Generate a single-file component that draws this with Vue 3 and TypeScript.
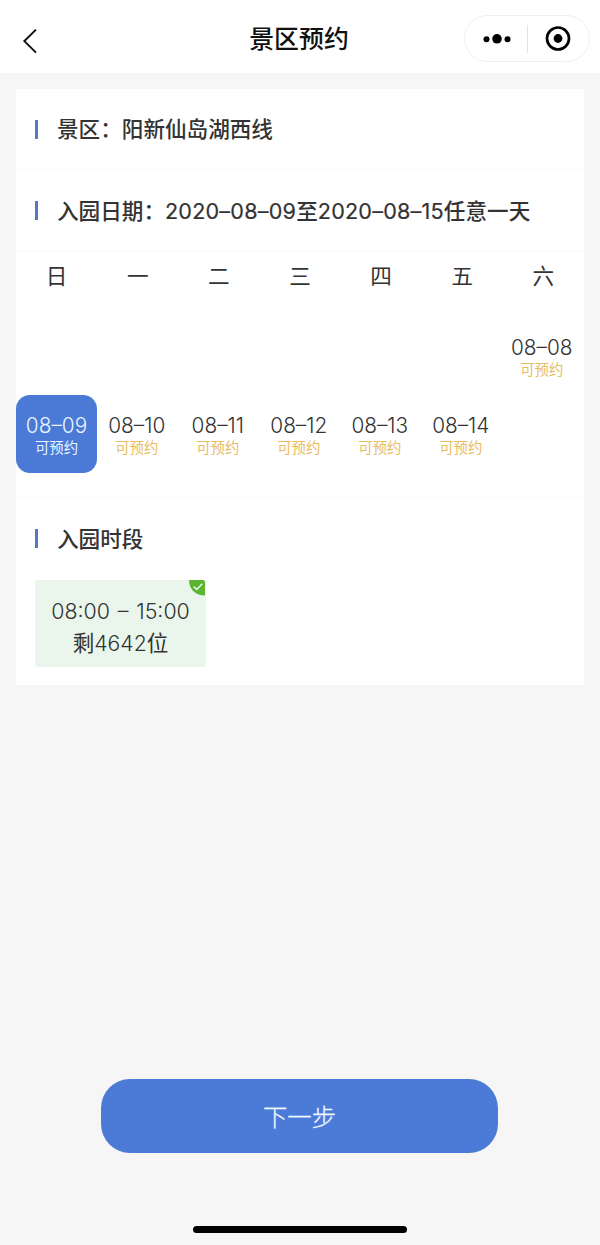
<script setup lang="ts">
interface Day {
  date: string
  selected?: boolean
}

const weekdays: string[] = ['日', '一', '二', '三', '四', '五', '六']

const weeks: (Day | null)[][] = [
  [null, null, null, null, null, null, { date: '08–08' }],
  [
    { date: '08–09', selected: true },
    { date: '08–10' },
    { date: '08–11' },
    { date: '08–12' },
    { date: '08–13' },
    { date: '08–14' },
    null,
  ],
]
</script>

<template>
  <div class="page">
    <header class="nav">
      <svg class="back" width="16" height="26" viewBox="0 0 16 26">
        <path d="M14 1.6 2.4 13.1 14 24.6" fill="none" stroke="#111" stroke-width="2" />
      </svg>
      <h1 class="nav-title">景区预约</h1>
      <div class="capsule">
        <svg width="28" height="12" viewBox="0 0 28 12">
          <circle cx="3.5" cy="6.3" r="3" />
          <circle cx="14" cy="5.8" r="4.8" />
          <circle cx="24.5" cy="6.3" r="3" />
        </svg>
        <span class="capsule-line"></span>
        <svg width="26" height="26" viewBox="0 0 26 26">
          <circle cx="13" cy="12.5" r="11" fill="none" stroke="#000" stroke-width="2.7" />
          <circle cx="13" cy="12.5" r="4.4" />
        </svg>
      </div>
    </header>

    <main class="card">
      <section class="row">
        <span class="bar"></span>
        <span>景区：阳新仙岛湖西线</span>
      </section>
      <section class="row row-date">
        <span class="bar"></span>
        <span>入园日期：<span class="num">2020–08–09</span>至<span class="num">2020–08–15</span>任意一天</span>
      </section>

      <section class="calendar">
        <div class="grid weekdays">
          <span v-for="w in weekdays" :key="w">{{ w }}</span>
        </div>
        <div v-for="(week, i) in weeks" :key="i" class="grid week">
          <div v-for="(day, j) in week" :key="j" class="day" :class="{ selected: day?.selected }">
            <template v-if="day">
              <span class="date">{{ day.date }}</span>
              <span class="state">可预约</span>
            </template>
          </div>
        </div>
      </section>

      <section class="period">
        <div class="row row-period">
          <span class="bar"></span>
          <span>入园时段</span>
        </div>
        <div class="slot">
          <span class="time">08:00 – 15:00</span>
          <span class="left">剩<span class="count">4642</span>位</span>
          <svg class="check" width="17" height="16" viewBox="0 0 17 16">
            <path d="M0 0H13.5Q16 0 16 2.5V15.5C7 15.5 0 10 0 0Z" fill="#5bb531" />
            <path d="M4.6 6.6 7.8 9.4 13.2 3.8" fill="none" stroke="#e9f8e4" stroke-width="1.5" />
          </svg>
        </div>
      </section>
    </main>

    <footer class="footer">
      <button class="next" type="button">下一步</button>
      <div class="home"></div>
    </footer>
  </div>
</template>

<style>
body {
  margin: 0;
  background: #f6f6f6;
}
</style>

<style scoped>
.page {
  display: flex;
  flex-direction: column;
  box-sizing: border-box;
  width: 600px;
  height: 1245px;
  background: #f6f6f6;
  color: #333;
  font-family: Inter, "Noto Sans CJK SC", sans-serif;
  font-size: 21.6px;
}

.nav {
  display: grid;
  grid-template-columns: 126px 1fr 126px;
  align-items: center;
  box-sizing: border-box;
  height: 73px;
  padding: 4px 10px 0;
  background: #fff;
}

.back {
  margin: 5px 0 0 12px;
}

.nav-title {
  margin: 1px 2px 0 0;
  color: #111;
  font-size: 24.9px;
  font-weight: 500;
  line-height: 36px;
  text-align: center;
}

.capsule {
  display: flex;
  align-items: center;
  justify-content: space-between;
  box-sizing: border-box;
  height: 47px;
  padding: 0 18px;
  border: 1px solid #efefef;
  border-radius: 24px;
}

.capsule-line {
  width: 1px;
  height: 28px;
  margin-left: -2px;
  background: #e2e2e2;
}

.card {
  width: 568px;
  height: 596px;
  margin: 16px auto 0;
  background: #fff;
}

.row {
  display: flex;
  align-items: center;
  gap: 19px;
  box-sizing: border-box;
  height: 81px;
  padding-left: 19px;
  border-bottom: 1px solid #f8f8f8;
  font-weight: 500;
  line-height: 32px;
  white-space: nowrap;
}

.row-date {
  height: 82px;
}

.num {
  font-weight: 400;
  letter-spacing: 0.2px;
  -webkit-text-stroke: 0.2px currentColor;
}

.bar {
  width: 3px;
  height: 19px;
  background: #5877bd;
}

.calendar {
  box-sizing: border-box;
  height: 246px;
  border-bottom: 1px solid #f8f8f8;
}

.grid {
  display: grid;
  grid-template-columns: repeat(7, 81px);
}

.weekdays {
  grid-template-columns: repeat(7, 1fr);
  height: 65px;
  line-height: 48px;
  text-align: center;
}

.week {
  height: 78px;
}

.day {
  display: flex;
  flex-direction: column;
  align-items: center;
  box-sizing: border-box;
  padding: 18px 1.5px 0 0;
}

.date {
  font-size: 20.8px;
  font-weight: 300;
  line-height: 26px;
}

.state {
  color: #e8bd62;
  font-size: 14.4px;
  line-height: 18px;
}

.selected {
  padding-right: 0;
  border-radius: 14px;
  background: #4a79d6;
  color: #e9f5ff;
}

.selected .state {
  color: #e9f5ff;
}

.row-period {
  height: 81px;
  border: 0;
}

.slot {
  position: relative;
  display: flex;
  flex-direction: column;
  align-items: center;
  box-sizing: border-box;
  width: 171px;
  height: 87px;
  margin: 1px 0 0 19px;
  padding-top: 15px;
  border-radius: 3px;
  background: #eaf6eb;
  line-height: 32px;
}

.time {
  font-size: 21.4px;
  font-weight: 300;
  word-spacing: 1.8px;
}

.count {
  font-size: 21.2px;
  font-weight: 300;
}

.check {
  position: absolute;
  top: 0;
  right: 0;
}

.footer {
  display: flex;
  flex-direction: column;
  align-items: center;
  margin-top: auto;
}

.next {
  width: 397px;
  height: 74px;
  margin-right: 1px;
  padding: 0 0 2px;
  border: 0;
  border-radius: 29px;
  background: #4b7ad7;
  color: #eef8ff;
  font-family: inherit;
  font-size: 24.4px;
  font-weight: 300;
  -webkit-text-stroke: 0.3px currentColor;
}

.home {
  width: 214px;
  height: 7px;
  margin: 73px 0 12px;
  border-radius: 4px;
  background: #000;
}
</style>
